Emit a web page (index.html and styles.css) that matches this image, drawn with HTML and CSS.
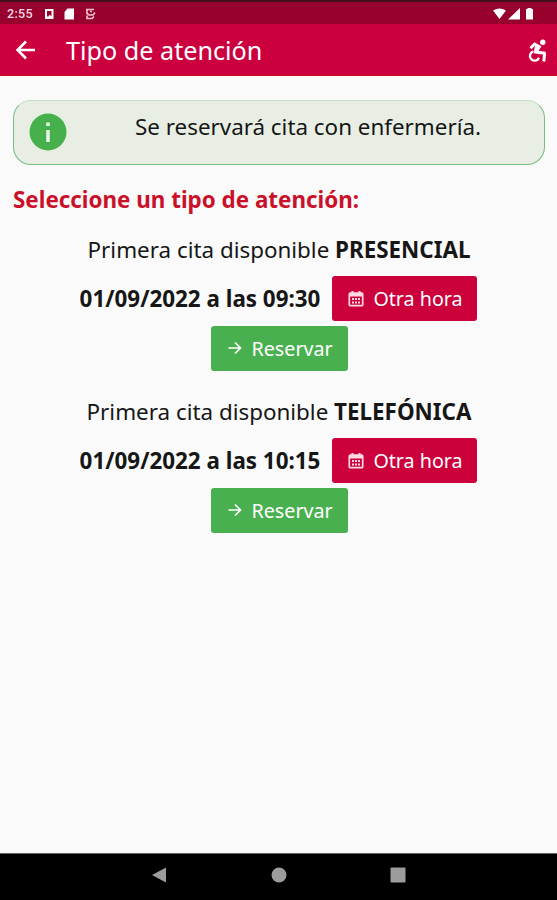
FILE: index.html
```html
<!DOCTYPE html>
<html lang="es">
<head>
  <meta charset="UTF-8">
  <meta name="viewport" content="width=device-width, initial-scale=1.0">
  <title>Tipo de atención</title>
  <link rel="stylesheet" href="styles.css">
</head>
<body>
  <div class="status-bar">
    <span class="clock">2:55</span>
    <svg class="status-left" width="54" height="12" viewBox="0 0 54 12">
      <path fill="#fff" fill-rule="evenodd" d="M1 1h8.500v10H1zM3 3v5.500h1.500l1-2 2 2V3z"/>
      <path fill="#fff" d="M23.500 0.500h6.500v11h-9.500V4z"/>
      <path fill="none" stroke="#f3c6d2" stroke-width="1.600" d="M42 1.500h8M43 1.500v4l2 1.500h4l2-2.500M43 7.500v3h5l2-2M46 3.500h2"/>
    </svg>
    <svg class="status-right" width="42" height="12" viewBox="0 0 42 12">
      <path fill="#fff" d="M0 2.500Q6.500-1.500 13 2.500L6.500 11zM15 11.500L27 0v11.500zM33 1h1.500V0h4v1H40v10.500h-7z"/>
    </svg>
  </div>
  <header class="toolbar">
    <svg class="back" width="20" height="20" viewBox="0 0 20 20">
      <path d="M19 10H2M10 1.500L1.500 10l8.500 8.500"/>
    </svg>
    <h1>Tipo de atención</h1>
    <svg class="accessible" width="20" height="24" viewBox="0 0 20 24">
      <circle cx="15.800" cy="3.200" r="2.700" fill="#fff" stroke="none"/>
      <path d="M3.500 9.200L7.500 5l5 2.800-4 5.400" stroke-width="2.800"/>
      <path d="M12 8l-3 5 8.300 1.200.2 1-.7 7.300" stroke-width="3"/>
      <path d="M6.500 12.400a4.700 4.700 0 1 0 5.500 6.300" stroke-width="2.300"/>
      <path d="M8 6l5 2.500-2 5-4-1z" stroke="none" fill="#fff"/>
    </svg>
  </header>

  <main class="content">
    <div class="notice">
      <svg class="info" width="38" height="38" viewBox="0 0 38 38">
        <circle cx="19" cy="19" r="18.500" fill="#45b04c"/>
        <path fill="#e9f3e6" d="M17.200 9.500h3.600V13h-3.600zM17.200 17h3.600v12h-3.600z"/>
      </svg>
      <p>Se reservará cita con enfermería.</p>
    </div>
    <h2>Seleccione un tipo de atención:</h2>

    <section class="option">
      <p class="first">Primera cita disponible <b>PRESENCIAL</b></p>
      <div class="slot">
        <b class="date">01/09/2022 a las 09:30</b>
        <button class="btn other">
          <svg width="16" height="17" viewBox="0 0 16 17"><rect x="1.300" y="3" width="13.400" height="12.700" rx="1" fill="none" stroke="#ffd9e3" stroke-width="1.700"/><path fill="#ffd9e3" d="M3.500 1h2v2h-2zM10.500 1h2v2h-2zM1.500 3h13v3.500h-13zM4 8h2v2H4zM7 8h2v2H7zM10 8h2v2h-2zM4 11.500h2v2H4zM7 11.500h2v2H7zM10 11.500h2v2h-2z"/></svg>
          <span>Otra hora</span>
        </button>
      </div>
      <button class="btn reserve">
        <svg width="14" height="14" viewBox="0 0 14 14"><path fill="none" stroke="#fff" stroke-width="1.700" d="M0.500 7h12M7 1.500L12.500 7 7 12.500"/></svg>
        <span>Reservar</span>
      </button>
    </section>

    <section class="option">
      <p class="first">Primera cita disponible <b>TELEFÓNICA</b></p>
      <div class="slot">
        <b class="date">01/09/2022 a las 10:15</b>
        <button class="btn other">
          <svg width="16" height="17" viewBox="0 0 16 17"><rect x="1.300" y="3" width="13.400" height="12.700" rx="1" fill="none" stroke="#ffd9e3" stroke-width="1.700"/><path fill="#ffd9e3" d="M3.500 1h2v2h-2zM10.500 1h2v2h-2zM1.500 3h13v3.500h-13zM4 8h2v2H4zM7 8h2v2H7zM10 8h2v2h-2zM4 11.500h2v2H4zM7 11.500h2v2H7zM10 11.500h2v2h-2z"/></svg>
          <span>Otra hora</span>
        </button>
      </div>
      <button class="btn reserve">
        <svg width="14" height="14" viewBox="0 0 14 14"><path fill="none" stroke="#fff" stroke-width="1.700" d="M0.500 7h12M7 1.500L12.500 7 7 12.500"/></svg>
        <span>Reservar</span>
      </button>
    </section>
  </main>

  <nav class="nav-bar">
    <svg width="16" height="16" viewBox="0 0 16 16"><path fill="#9c9c9c" d="M15 0.500v15L1 8z"/></svg>
    <svg width="16" height="16" viewBox="0 0 16 16"><circle cx="8" cy="8" r="7.500" fill="#9c9c9c"/></svg>
    <svg width="16" height="16" viewBox="0 0 16 16"><rect x="0.500" y="0.500" width="15" height="15" rx="1" fill="#9c9c9c"/></svg>
  </nav>
</body>
</html>
```

FILE: styles.css
```css
* {
  box-sizing: border-box;
}
body {
  margin: 0;
  height: 900px;
  display: flex;
  flex-direction: column;
  overflow: hidden;
  background: #fafafa;
  color: #161616;
  font-family: 'Noto Sans', sans-serif;
  font-size: 22.4px;
}
h1, h2, p {
  margin: 0;
}
svg {
  display: block;
  flex: none;
}
.status-bar {
  height: 24px;
  display: flex;
  align-items: center;
  padding: 1px 22px 0 7px;
  background: #98002e;
  border-top: 2px solid #41101d;
}
.clock {
  width: 37px;
  font-family: Roboto, sans-serif;
  font-size: 12.5px;
  font-weight: 500;
  line-height: 14px;
  letter-spacing: 0.3px;
  color: #f7dbe2;
}
.status-right {
  margin-left: auto;
}
.toolbar {
  height: 52px;
  display: flex;
  align-items: center;
  padding: 0 10px 0 16px;
  background: #cc003f;
  border-bottom: 1px solid #d00a1c;
  color: #fff;
}
.back {
  fill: none;
  stroke: #fff;
  stroke-width: 2.6;
}
.toolbar h1 {
  flex: 1;
  padding-left: 30px;
  font-size: 25.2px;
  font-weight: 400;
  line-height: 34px;
}
.accessible {
  margin-top: 2px;
  fill: none;
  stroke: #fff;
}
.content {
  flex: 1;
  padding: 24px 12px 0 13px;
}
.notice {
  height: 65px;
  display: flex;
  padding: 12px 14px 0 15px;
  background: #e8eee4;
  border: 1px solid #78bd80;
  border-top-color: #c5dec3;
  border-radius: 18px;
}
.notice p {
  flex: 1;
  line-height: 28px;
  padding-left: 19px;
  text-align: center;
}
.content h2 {
  margin-top: 20px;
  font-size: 22.4px;
  line-height: 30px;
  color: #cb1029;
}
.option {
  display: flex;
  flex-direction: column;
  align-items: center;
  margin-top: 20px;
}
.option + .option {
  margin-top: 26px;
}
.first {
  line-height: 30px;
}
.slot {
  display: flex;
  align-items: center;
  gap: 12px;
  margin: 11px 1px 5px 0;
}
.date {
  line-height: 30px;
}
.btn {
  height: 45px;
  display: flex;
  align-items: center;
  border: none;
  border-radius: 3px;
  padding: 0 15px 1px 17px;
  color: #fff;
  font-family: inherit;
  font-size: 19.7px;
  white-space: nowrap;
}
.other {
  width: 145px;
  gap: 9px;
  padding: 0 14px 1px 16px;
  background: #cc003b;
}
.reserve {
  width: 137px;
  gap: 10px;
  background: #49b04f;
}
.nav-bar {
  height: 47px;
  display: flex;
  justify-content: center;
  gap: 103.5px;
  padding-top: 13px;
  background: #000;
  border-top: 1px solid #666;
}
```
